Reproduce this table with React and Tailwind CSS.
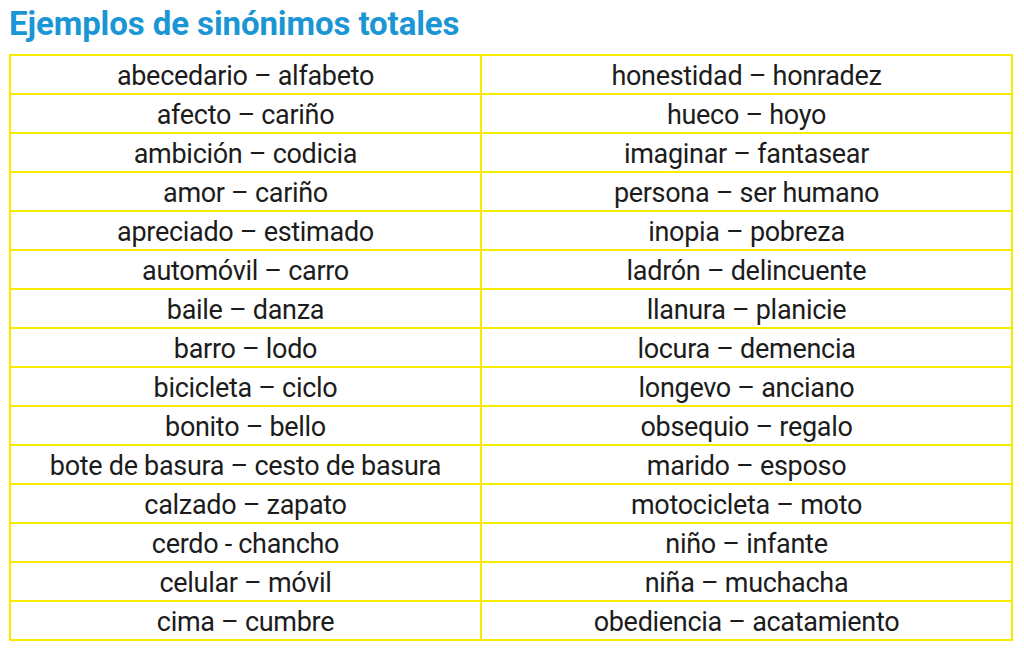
import React from "react";

const rows = [
  ["abecedario – alfabeto", "honestidad – honradez"],
  ["afecto – cariño", "hueco – hoyo"],
  ["ambición – codicia", "imaginar – fantasear"],
  ["amor – cariño", "persona – ser humano"],
  ["apreciado – estimado", "inopia – pobreza"],
  ["automóvil – carro", "ladrón – delincuente"],
  ["baile – danza", "llanura – planicie"],
  ["barro – lodo", "locura – demencia"],
  ["bicicleta – ciclo", "longevo – anciano"],
  ["bonito – bello", "obsequio – regalo"],
  ["bote de basura – cesto de basura", "marido – esposo"],
  ["calzado – zapato", "motocicleta – moto"],
  ["cerdo - chancho", "niño – infante"],
  ["celular – móvil", "niña – muchacha"],
  ["cima – cumbre", "obediencia – acatamiento"],
];

export default function App() {
  return (
    <div className="w-[1024px] h-[656px] bg-white overflow-hidden" style={{ fontFamily: "Roboto, 'Liberation Sans', sans-serif" }}>
      <h1 className="pl-[9px] pt-[5px] h-[54px] text-[33px] leading-[38px] font-bold text-[#1b96d5] tracking-[-0.1px]">
        Ejemplos de sinónimos totales
      </h1>
      <div className="ml-[9px] w-[1004px]">
        <table className="w-full border-collapse">
          <tbody>
            {rows.map((r, i) => (
              <tr key={i} className="h-[39px]">
                <td className="w-[471px] border-2 border-[#f7eb00] text-center text-[27px] text-[#1c1c1c] leading-none px-0 pt-[4px] pb-0 tracking-[-0.3px]">
                  {r[0]}
                </td>
                <td className="border-2 border-[#f7eb00] text-center text-[27px] text-[#1c1c1c] leading-none px-0 pt-[4px] pb-0 tracking-[-0.3px]">
                  {r[1]}
                </td>
              </tr>
            ))}
          </tbody>
        </table>
      </div>
    </div>
  );
}
